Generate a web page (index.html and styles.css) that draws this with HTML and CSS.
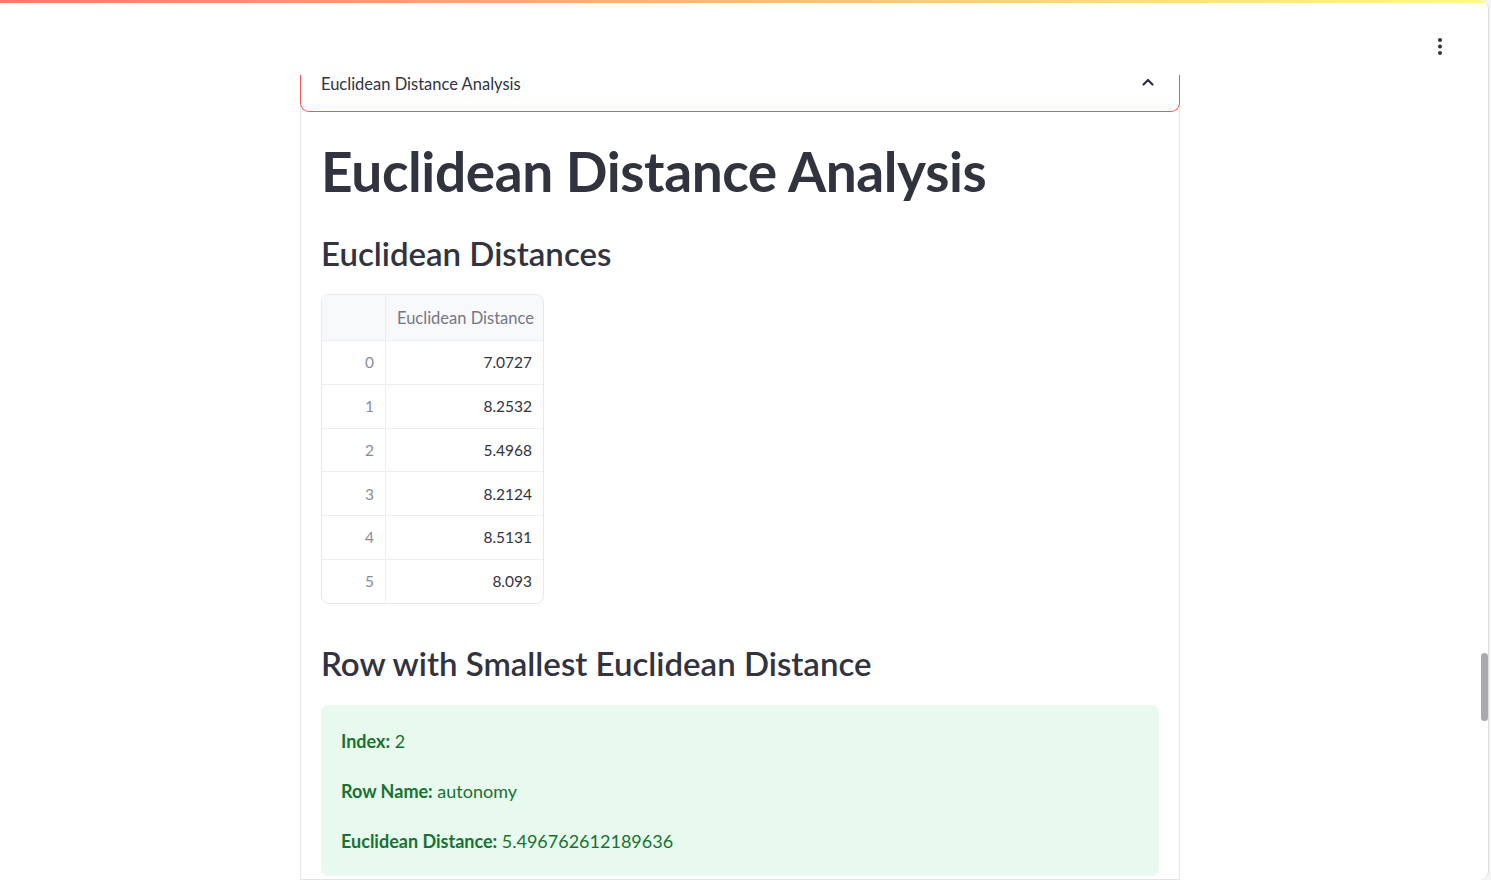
FILE: index.html
```html
<!DOCTYPE html>
<html lang="en">
<head>
<meta charset="utf-8">
<title>Euclidean Distance Analysis</title>
<link rel="stylesheet" href="styles.css">
</head>
<body>
<div class="app">
  <header class="topbar">
    <div class="decoration"></div>
    <div class="toolbar">
      <button class="menu-btn" aria-label="Main menu">
        <svg width="4" height="17" viewBox="0 0 4 17"><circle cx="2" cy="2" r="2"/><circle cx="2" cy="8.5" r="2"/><circle cx="2" cy="15" r="2"/></svg>
      </button>
    </div>
  </header>
  <main class="main">
    <section class="expander">
      <div class="expander-head">
        <span class="expander-label">Euclidean Distance Analysis</span>
        <svg class="chevron" width="12" height="8" viewBox="0 0 12 8"><path d="M1.5 6.5 L6 2 L10.5 6.5" fill="none" stroke="#31333f" stroke-width="2.2" stroke-linecap="round" stroke-linejoin="round"/></svg>
      </div>
      <div class="expander-body">
        <h1 class="title">Euclidean Distance Analysis</h1>
        <h3 class="subheader">Euclidean Distances</h3>
        <div class="table">
          <div class="row head">
            <div class="cell idx"></div>
            <div class="cell val">Euclidean Distance</div>
          </div>
          <div class="row"><div class="cell idx">0</div><div class="cell val">7.0727</div></div>
          <div class="row"><div class="cell idx">1</div><div class="cell val">8.2532</div></div>
          <div class="row"><div class="cell idx">2</div><div class="cell val">5.4968</div></div>
          <div class="row"><div class="cell idx">3</div><div class="cell val">8.2124</div></div>
          <div class="row"><div class="cell idx">4</div><div class="cell val">8.5131</div></div>
          <div class="row"><div class="cell idx">5</div><div class="cell val">8.093</div></div>
        </div>
        <h3 class="subheader second">Row with Smallest Euclidean Distance</h3>
        <div class="alert">
          <p><strong>Index:</strong> 2</p>
          <p><strong>Row Name:</strong> autonomy</p>
          <p><strong>Euclidean Distance:</strong> 5.496762612189636</p>
        </div>
      </div>
    </section>
  </main>
  <div class="scroll-thumb"></div>
</div>
</body>
</html>
```

FILE: styles.css
```css
* { box-sizing: border-box; }
html, body { margin: 0; padding: 0; }
body {
  background: #f4f4f4;
  font-family: Lato, "Noto Sans", sans-serif;
  color: #31333f;
  width: 1491px;
  height: 880px;
  overflow: hidden;
}
.app {
  position: relative;
  width: 1489px;
  height: 880px;
  background: #ffffff;
  border-right: 1px solid #dedede;
  border-radius: 0 9px 9px 0;
  overflow: hidden;
}
.topbar {
  height: 75px;
  display: flex;
  flex-direction: column;
}
.decoration {
  height: 3px;
  background: linear-gradient(90deg, #ff7a66, #fffa88);
}
.toolbar {
  flex: 1;
  display: flex;
  justify-content: flex-end;
  align-items: flex-start;
  padding: 35px 46px 0 0;
}
.menu-btn {
  border: 0;
  background: none;
  padding: 0;
  display: flex;
  fill: #31333f;
}
.main {
  padding-left: 300px;
}
.expander {
  width: 880px;
  height: 805px;
  border: 1px solid #e4e4e4;
  border-top: none;
}
.expander-head {
  height: 37px;
  margin: 0 -1px;
  border: 1px solid #f0565a;
  border-top: none;
  border-radius: 0 0 9px 9px;
  padding: 0 25px 0 20px;
  display: flex;
  justify-content: space-between;
  align-items: flex-start;
}
.expander-label {
  font-size: 16.5px;
  line-height: 18px;
}
.chevron { margin-top: 3px; }
.expander-body {
  padding: 0 20px;
}
.title {
  margin: 26px 0 0;
  font-size: 55px;
  line-height: 66px;
  font-weight: 700;
  letter-spacing: -0.4px;
}
.subheader {
  margin: 29px 0 0;
  font-size: 33px;
  line-height: 40px;
  font-weight: 600;
}
.subheader.second { margin-top: 39px; }
.table {
  margin-top: 21px;
  width: 223px;
  border: 1px solid #e6e8ee;
  border-radius: 8px;
  overflow: hidden;
  font-size: 15.5px;
}
.row {
  display: flex;
  height: 43.75px;
  border-top: 1px solid #eceef2;
}
.row.head {
  height: 45px;
  border-top: none;
  background: #f8f9fb;
  font-size: 16.5px;
}
.cell {
  display: flex;
  align-items: center;
  justify-content: flex-end;
  padding: 0 11px;
  white-space: nowrap;
}
.cell.idx {
  width: 64px;
  flex: none;
  border-right: 1px solid #eceef2;
  color: #8a8d98;
}
.cell.val {
  flex: 1;
  color: #31333f;
}
.row.head .cell.val { color: #757784; }
.alert {
  margin-top: 22px;
  background: #e8f9ee;
  border-radius: 8px;
  padding: 20px 20px 19px;
  color: #177233;
  font-size: 18px;
  line-height: 32px;
}
.alert p { margin: 0 0 18px; }
.alert p:last-child { margin-bottom: 0; }
.alert strong { font-weight: 700; }
.scroll-thumb {
  position: absolute;
  left: 1481px;
  top: 653px;
  width: 7px;
  height: 68px;
  border-radius: 4px;
  background: #a9a9b1;
}
```
